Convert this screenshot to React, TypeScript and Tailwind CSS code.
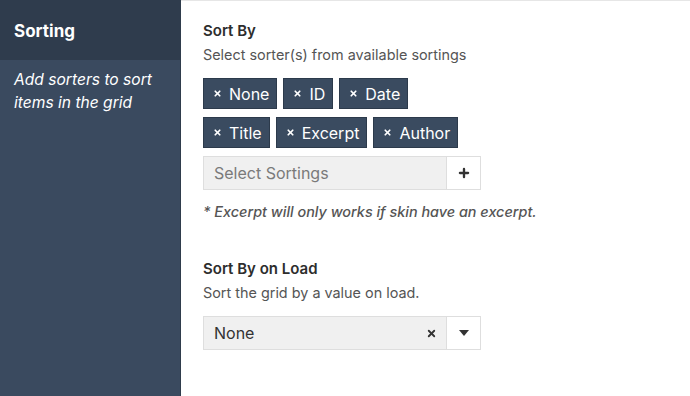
import { X, Plus } from 'lucide-react';

const sorters = [['None', 'ID', 'Date'], ['Title', 'Excerpt', 'Author']];

function Tag({ label }: { label: string }) {
  return (
    <span className="h-[31px] flex items-center gap-[7px] pl-[9px] pr-[7px] bg-[#3a4b60] border border-[#2c3a4b] text-white text-[16px]">
      <X size={9} strokeWidth={4.5} />
      {label}
    </span>
  );
}

export default function App() {
  return (
    <div className="w-[690px] h-[396px] flex bg-white font-['Inter',Arial,sans-serif] overflow-hidden">
      <aside className="w-[181px] shrink-0 bg-[#3a4a5f] border-r border-[#2f3c4c] flex flex-col">
        <div className="h-[60px] bg-[#2f3c4d] flex items-center px-[14px] pt-[4px] text-white text-[17px] font-bold">
          Sorting
        </div>
        <p className="px-[14px] pt-[8px] text-white text-[15.6px] italic leading-[23px]">
          Add sorters to sort items in the grid
        </p>
      </aside>

      <main className="flex-1 border-t border-[#e6e6e6] pl-[22px] pt-[20px]">
        <h3 className="text-[15px] font-semibold text-[#2d2d2d] leading-[20px]">Sort By</h3>
        <p className="mt-[4px] text-[14.4px] text-[#555] leading-[20px]">Select sorter(s) from available sortings</p>

        <div className="mt-[13px] flex flex-col gap-[8px]">
          {sorters.map((row, i) => (
            <div key={i} className="flex gap-[6px]">
              {row.map((s) => (
                <Tag key={s} label={s} />
              ))}
            </div>
          ))}
        </div>

        <div className="mt-[8px] w-[278px] h-[34px] flex border border-[#dedede]">
          <div className="flex-1 bg-[#f0f0f0] flex items-center px-[10px] text-[16px] text-[#7a7a7a]">
            Select Sortings
          </div>
          <div className="w-[34px] border-l border-[#dedede] bg-white flex items-center justify-center text-[#333]">
            <Plus size={14} strokeWidth={4} />
          </div>
        </div>

        <p className="mt-[12px] text-[14.4px] italic font-medium text-[#555] leading-[20px]">
          * Excerpt will only works if skin have an excerpt.
        </p>

        <h3 className="mt-[37px] text-[15px] font-semibold text-[#2d2d2d] leading-[20px]">Sort By on Load</h3>
        <p className="mt-[4px] text-[14.4px] text-[#555] leading-[20px]">Sort the grid by a value on load.</p>

        <div className="mt-[13px] w-[278px] h-[34px] flex border border-[#dedede]">
          <div className="flex-1 bg-[#f0f0f0] flex items-center justify-between pl-[10px] pr-[9px] text-[16px] text-[#333]">
            None
            <X size={11} strokeWidth={4} />
          </div>
          <div className="w-[34px] border-l border-[#dedede] bg-white flex items-center justify-center">
            <svg width="10" height="6" viewBox="0 0 10 6">
              <path d="M0 0h10L5 6z" fill="#333" />
            </svg>
          </div>
        </div>
      </main>
    </div>
  );
}
